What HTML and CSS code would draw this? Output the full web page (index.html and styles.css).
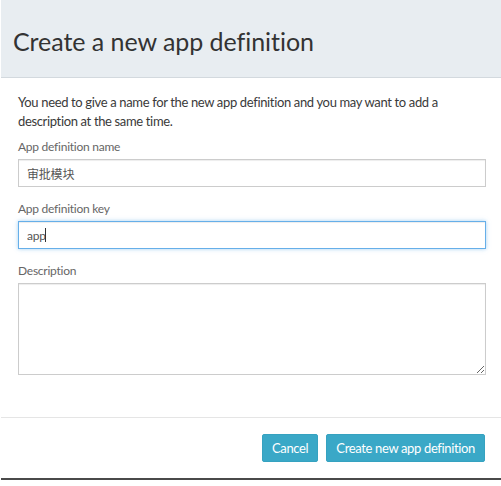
FILE: index.html
```html
<!DOCTYPE html>
<html lang="en">
<head>
    <meta charset="UTF-8">
    <meta name="viewport" content="width=device-width, initial-scale=1.0">
    <title>Create a new app definition</title>
    <link rel="stylesheet" href="styles.css">
</head>
<body>
    <div class="modal">
        <div class="modal-header">
            <h2>Create a new app definition</h2>
        </div>

        <div class="modal-body">
            <p>You need to give a name for the new app definition and you may want to add a description at the same time.</p>

            <div class="form-group">
                <label for="appName">App definition name</label>
                <input type="text" id="appName" class="form-control" value="审批模块">
            </div>

            <div class="form-group">
                <label for="appKey">App definition key</label>
                <div class="input-wrap">
                    <input type="text" id="appKey" class="form-control is-focused" value="app">
                    <span class="caret"></span>
                </div>
            </div>

            <div class="form-group">
                <label for="appDescription">Description</label>
                <textarea id="appDescription" class="form-control description"></textarea>
            </div>
        </div>

        <div class="modal-footer">
            <button type="button" class="btn">Cancel</button>
            <button type="button" class="btn">Create new app definition</button>
        </div>
    </div>
</body>
</html>
```

FILE: styles.css
```css
body {
    font-family: Lato, "Noto Sans CJK SC", sans-serif;
    font-size: 13px;
    letter-spacing: -0.35px;
    color: #333;
    background-color: #fff;
    margin: 0;
    padding: 0;
}
.modal {
    width: 500px;
    margin-left: 1px;
    border-bottom: 2px solid #4a4a4a;
}
.modal-header {
    background-color: #e8edf1;
    border-bottom: 1px solid #d3d9de;
    padding: 0 12px;
    height: 77px;
    display: flex;
    align-items: center;
}
h2 {
    margin: 0;
    font-size: 25px;
    font-weight: 400;
    letter-spacing: -0.05px;
    color: #333;
    line-height: 30px;
    padding-top: 4px;
}
.modal-body {
    padding: 15px 15px 42px 17px;
}
p {
    margin: 0 0 6px;
    line-height: 19px;
    color: #3a3a3a;
}
.form-group {
    margin-bottom: 12px;
}
.form-group:last-child {
    margin-bottom: 0;
}
label {
    display: block;
    font-size: 12px;
    letter-spacing: -0.25px;
    line-height: 19px;
    margin-bottom: 3px;
    color: #666;
}
.form-control {
    display: block;
    width: 100%;
    height: 28px;
    padding: 0 8px;
    border: 1px solid #ccc;
    border-radius: 0;
    box-shadow: inset 0 1px 1px rgba(0, 0, 0, 0.075);
    font-family: Lato, "Noto Sans CJK SC", sans-serif;
    font-size: 12px;
    letter-spacing: -0.2px;
    color: #555;
    box-sizing: border-box;
    outline: none;
}
.form-control.is-focused {
    border-color: #66afe9;
    box-shadow: inset 0 1px 1px rgba(0, 0, 0, 0.075), 0 0 4px rgba(102, 175, 233, 0.6);
}
.input-wrap {
    position: relative;
}
.caret {
    position: absolute;
    left: 27px;
    top: 7px;
    width: 1px;
    height: 14px;
    background: #333;
}
.description {
    height: 92px;
    resize: vertical;
    padding: 6px 8px;
}
.modal-footer {
    border-top: 1px solid #e5e5e5;
    padding: 16px 16px 16px;
    display: flex;
    justify-content: flex-end;
    gap: 8px;
}
.btn {
    background-color: #3aa8c7;
    color: #fff;
    border: 1px solid #36a2c0;
    border-radius: 2px;
    height: 28px;
    padding: 0 9px;
    font-family: Lato, sans-serif;
    font-size: 13px;
    letter-spacing: -0.35px;
    cursor: pointer;
}
.btn:hover {
    background-color: #3196b3;
}
```
